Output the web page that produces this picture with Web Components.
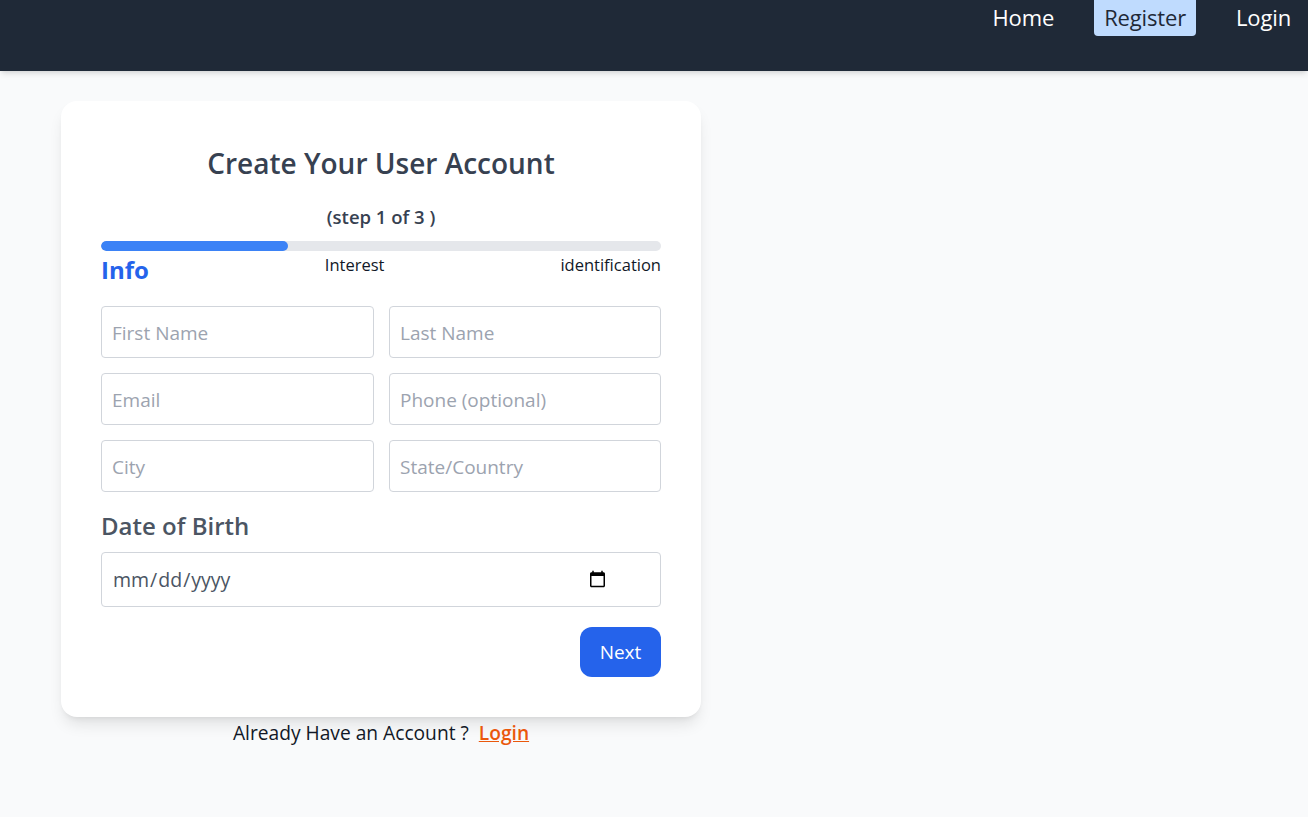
<!DOCTYPE html>
<html lang="en">
<head>
<meta charset="utf-8">
<title>Register</title>
<style>
  html, body { margin: 0; background: #f9fafb; }
  body { font-family: "Open Sans", "Noto Sans", sans-serif; min-height: 817px; overflow: hidden; }
</style>
</head>
<body>
<top-nav>
  <nav-link>Home</nav-link>
  <nav-link active>Register</nav-link>
  <nav-link>Login</nav-link>
</top-nav>

<register-page>
  <register-card heading="Create Your User Account">
    <step-progress current="1" total="3"></step-progress>
    <form-row>
      <text-field placeholder="First Name"></text-field>
      <text-field placeholder="Last Name"></text-field>
      <text-field placeholder="Email"></text-field>
      <text-field placeholder="Phone (optional)"></text-field>
      <text-field placeholder="City"></text-field>
      <text-field placeholder="State/Country"></text-field>
    </form-row>
    <date-field label="Date of Birth"></date-field>
    <next-button>Next</next-button>
  </register-card>
  <login-hint></login-hint>
</register-page>

<script>
class TopNav extends HTMLElement {
  constructor() {
    super();
    this.attachShadow({mode: 'open'});
    this.shadowRoot.innerHTML = `
      <style>
        :host {
          display: flex;
          justify-content: flex-end;
          align-items: flex-start;
          gap: 30px;
          height: 71px;
          padding-right: 7px;
          box-sizing: border-box;
          background: #1f2937;
          box-shadow: 0 4px 6px -1px rgba(0,0,0,.1), 0 2px 4px -2px rgba(0,0,0,.1);
        }
      </style>
      <slot></slot>
    `;
  }
}

class NavLink extends HTMLElement {
  constructor() {
    super();
    this.attachShadow({mode: 'open'});
    this.shadowRoot.innerHTML = `
      <style>
        :host {
          display: block;
          height: 36px;
          line-height: 35px;
          padding: 0 10px;
          font-size: 22px;
          letter-spacing: -0.15px;
          color: #fff;
          border-radius: 0 0 4px 4px;
        }
        :host([active]) { background: #bfdbfe; color: #1f2937; }
      </style>
      <slot></slot>
    `;
  }
}

class RegisterPage extends HTMLElement {
  constructor() {
    super();
    this.attachShadow({mode: 'open'});
    this.shadowRoot.innerHTML = `
      <style>
        :host { display: block; width: 640px; margin: 30px 0 0 61px; }
      </style>
      <slot></slot>
    `;
  }
}

class RegisterCard extends HTMLElement {
  constructor() {
    super();
    this.attachShadow({mode: 'open'});
    this.shadowRoot.innerHTML = `
      <style>
        :host {
          display: block;
          box-sizing: border-box;
          height: 616px;
          padding: 40px;
          background: #fff;
          border-radius: 16px;
          box-shadow: 0 10px 15px -3px rgba(0,0,0,.1), 0 4px 6px -4px rgba(0,0,0,.1);
        }
        h1 {
          margin: 0;
          height: 44px;
          line-height: 44px;
          text-align: center;
          font-size: 28px;
          font-weight: 600;
          color: #374151;
        }
      </style>
      <h1>${this.getAttribute('heading')}</h1>
      <slot></slot>
    `;
  }
}

class StepProgress extends HTMLElement {
  constructor() {
    super();
    this.attachShadow({mode: 'open'});
    const current = this.getAttribute('current');
    const total = this.getAttribute('total');
    this.shadowRoot.innerHTML = `
      <style>
        :host { display: block; margin-top: 16px; }
        .step {
          height: 40px;
          line-height: 32px;
          text-align: center;
          font-size: 18.5px;
          font-weight: 600;
          color: #374151;
        }
        .track { height: 10px; border-radius: 5px; background: #e5e7eb; overflow: hidden; }
        .fill { width: ${current / total * 100}%; height: 100%; border-radius: 5px; background: #3b82f6; }
        .labels {
          display: flex;
          justify-content: space-between;
          align-items: flex-start;
          height: 55px;
          font-size: 16.5px;
          line-height: 28px;
          color: #111827;
        }
        .on { font-size: 24px; font-weight: 700; line-height: 38px; color: #2563eb; }
      </style>
      <div class="step">(step ${current} of ${total} )</div>
      <div class="track"><div class="fill"></div></div>
      <div class="labels">
        <span class="on">Info</span>
        <span>Interest</span>
        <span>identification</span>
      </div>
    `;
  }
}

class FormRow extends HTMLElement {
  constructor() {
    super();
    this.attachShadow({mode: 'open'});
    this.shadowRoot.innerHTML = `
      <style>
        :host { display: grid; grid-template-columns: 273px 272px; gap: 15px; }
      </style>
      <slot></slot>
    `;
  }
}

class TextField extends HTMLElement {
  constructor() {
    super();
    this.attachShadow({mode: 'open'});
    this.shadowRoot.innerHTML = `
      <style>
        :host { display: block; }
        input {
          display: block;
          box-sizing: border-box;
          width: 100%;
          height: 52px;
          padding: 2px 10px 0;
          border: 1px solid #d1d5db;
          border-radius: 4px;
          background: #fff;
          font: 19px "Open Sans", "Noto Sans", sans-serif;
          color: #374151;
        }
        input::placeholder { color: #9ca3af; opacity: 1; }
      </style>
      <input type="text" placeholder="${this.getAttribute('placeholder')}">
    `;
  }
}

class DateField extends HTMLElement {
  constructor() {
    super();
    this.attachShadow({mode: 'open'});
    this.shadowRoot.innerHTML = `
      <style>
        :host { display: block; }
        label {
          display: block;
          height: 60px;
          padding-top: 15px;
          box-sizing: border-box;
          line-height: 38px;
          font-size: 24px;
          font-weight: 600;
          color: #4b5563;
        }
        input {
          display: block;
          box-sizing: border-box;
          width: 100%;
          height: 55px;
          padding: 0 51px 0 10px;
          border: 1px solid #d1d5db;
          border-radius: 4px;
          background: #fff;
          font: 19.5px "Open Sans", "Noto Sans", sans-serif;
          color: #4b5563;
        }
      </style>
      <label for="dob">${this.getAttribute('label')}</label>
      <input id="dob" type="date">
    `;
  }
}

class NextButton extends HTMLElement {
  constructor() {
    super();
    this.attachShadow({mode: 'open'});
    this.shadowRoot.innerHTML = `
      <style>
        :host { display: flex; justify-content: flex-end; margin-top: 20px; }
        button {
          width: 81px;
          height: 50px;
          border: 0;
          border-radius: 12px;
          background: #2563eb;
          color: #fff;
          font: 500 19px "Open Sans", "Noto Sans", sans-serif;
        }
      </style>
      <button type="button"><slot></slot></button>
    `;
  }
}

class LoginHint extends HTMLElement {
  constructor() {
    super();
    this.attachShadow({mode: 'open'});
    this.shadowRoot.innerHTML = `
      <style>
        :host {
          display: flex;
          justify-content: center;
          gap: 10px;
          height: 32px;
          line-height: 32px;
          font-size: 19.2px;
          color: #111827;
        }
        a { color: #ea580c; font-weight: 600; text-decoration: underline; }
      </style>
      <span>Already Have an Account ?</span>
      <a href="#">Login</a>
    `;
  }
}

customElements.define('top-nav', TopNav);
customElements.define('nav-link', NavLink);
customElements.define('register-page', RegisterPage);
customElements.define('register-card', RegisterCard);
customElements.define('step-progress', StepProgress);
customElements.define('form-row', FormRow);
customElements.define('text-field', TextField);
customElements.define('date-field', DateField);
customElements.define('next-button', NextButton);
customElements.define('login-hint', LoginHint);
</script>
</body>
</html>
